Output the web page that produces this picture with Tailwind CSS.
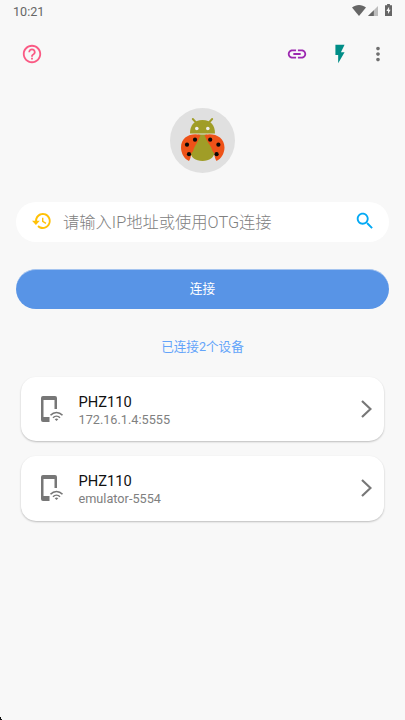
<!DOCTYPE html>
<html lang="zh-CN">
<head>
<meta charset="utf-8">
<meta name="viewport" content="width=device-width, initial-scale=1">
<title>连接设备</title>
<script src="https://cdn.jsdelivr.net/npm/@tailwindcss/browser@4"></script>
</head>
<body class="relative h-[720px] w-[405px] overflow-hidden bg-[#f8f8f8] font-[Roboto,'Noto_Sans_CJK_SC',sans-serif]">
<div class="flex h-6 items-center justify-between pl-[13px] pr-[13px] text-[#666]">
  <span class="text-[12.600px] leading-6">10:21</span>
  <div class="flex h-6 items-start pt-[5px]">
    <svg class="h-[11px] w-[14px]" viewBox="0 0 14 11"><path fill="#666" d="M0 2.600C4-.8 10-.8 14 2.600L7 11z"/></svg>
    <svg class="ml-[2px] mt-[1px] h-[10px] w-[10px]" viewBox="0 0 10 10"><path fill="#bdbdbd" d="M0 10 10 0v10z"/><path fill="#666" d="M0 10 5.800 4.200V10z"/></svg>
    <svg class="-mt-px ml-[7px] h-[12px] w-[7px]" viewBox="0 0 7 12"><path fill="#666" d="M2.100 0h2.800v1.200H7V12H0V1.200h2.100z"/><path fill="#f8f8f8" d="M4.100 2.800 1.400 7H3v3l2.600-4.200H4.100z"/></svg>
  </div>
</div>
<header class="flex h-[60px] items-center pl-[21px] pr-4">
  <svg class="size-[22px]" viewBox="0 0 24 24" fill="#fa5a84"><path d="M11 18h2v-2h-2v2zm1-16C6.480 2 2 6.480 2 12s4.480 10 10 10 10-4.480 10-10S17.520 2 12 2zm0 18c-4.410 0-8-3.590-8-8s3.590-8 8-8 8 3.590 8 8-3.590 8-8 8zm0-14c-2.210 0-4 1.790-4 4h2c0-1.100.9-2 2-2s2 .9 2 2c0 2-3 1.750-3 5h2c0-2.250 3-2.500 3-5 0-2.210-1.790-4-4-4z"/></svg>
  <svg class="ml-auto size-[22px]" viewBox="0 0 24 24" fill="#9c27b0"><path d="M3.900 12c0-1.710 1.390-3.100 3.100-3.100h4V7H7c-2.760 0-5 2.240-5 5s2.240 5 5 5h4v-1.900H7c-1.710 0-3.100-1.390-3.100-3.100zM8 13h8v-2H8v2zm9-6h-4v1.900h4c1.710 0 3.100 1.390 3.100 3.100s-1.390 3.100-3.100 3.100h-4V17h4c2.760 0 5-2.240 5-5s-2.240-5-5-5z"/></svg>
  <svg class="ml-[21px] size-[22px]" viewBox="0 0 24 24" fill="#008d87"><path d="M7 2v11h3v9l7-12h-4l4-8z"/></svg>
  <svg class="ml-4 size-[22px]" viewBox="0 0 24 24" fill="#707070"><path d="M12 8c1.100 0 2-.9 2-2s-.9-2-2-2-2 .9-2 2 .9 2 2 2zm0 2c-1.100 0-2 .9-2 2s.9 2 2 2 2-.9 2-2-.9-2-2-2zm0 6c-1.100 0-2 .9-2 2s.9 2 2 2 2-.9 2-2-.9-2-2-2z"/></svg>
</header>
<main class="flex flex-col px-4 pt-6">
  <svg class="size-[65px] self-center" viewBox="0 0 65 65">
    <circle cx="32.500" cy="32.500" r="32.500" fill="#e0e0e0"/>
    <path d="M26 14.500 22.800 11M39 14.500l3.200-3.500" stroke="#a09d27" stroke-width="1.900" stroke-linecap="round" fill="none"/>
    <path d="M20 25.500c0-8 4-13.500 12.500-13.500S45 17.500 45 25.500z" fill="#a09d27"/>
    <circle cx="26.800" cy="20.500" r="1.800" fill="#eee"/><circle cx="37.800" cy="20.500" r="1.800" fill="#eee"/>
    <path d="M28 26.500h9c2.500 7 7.500 11 7.500 17 0 6-5 9.500-12 9.500s-12-3.500-12-9.500c0-6 5-10 7.500-17z" fill="#a09d27"/>
    <path d="M30.500 27C21 24.500 11 29 11 39.500c0 6 3.500 11.500 8 13.500 1.800-3 1.800-5 2.500-8 1.500-1 1.800-3 2.500-5 2-4 5-8 6.500-13z" fill="#ee5218"/>
    <path d="M34.500 27C44 24.500 54.500 29 54.500 39.500c0 6-3.500 11.500-8 13.500-1.800-3-1.800-5-2.500-8-1.500-1-1.800-3-2.500-5-2-4-5.500-8-7-13z" fill="#ee5218"/>
    <g fill="#080808"><circle cx="25" cy="31.700" r="2.100"/><circle cx="17" cy="36.700" r="2.100"/><circle cx="19" cy="46.200" r="2.100"/><circle cx="40.200" cy="31.700" r="2.100"/><circle cx="48.400" cy="36.700" r="2.100"/><circle cx="46.600" cy="46.200" r="2.100"/></g>
  </svg>
  <div class="mt-[29px] flex h-10 items-center rounded-[20px] bg-white pl-4 pr-[13px]">
    <svg class="mt-[-2px] size-5" viewBox="0 0 24 24" fill="#ffc107"><path d="M13 2.500c-5 0-9.200 4-9.300 9.200H0l4.700 5L9.400 11.700H6.100c.1-3.900 3.200-6.900 6.900-6.900 4 0 7.200 3.200 7.200 7.200s-3.200 7.200-7.200 7.200c-1.930 0-3.680-.79-4.940-2.060l-1.620 1.620C8.070 20.490 10.410 21.500 13 21.500c5.200 0 9.400-4.230 9.400-9.500S18.200 2.500 13 2.500zm-1 5.500v5l4.280 2.540.9-1.410-3.480-2.080V8H12z"/></svg>
    <span class="ml-[11px] whitespace-nowrap pt-[2px] text-[16.300px] font-light leading-[38px] text-[#808080]">请输入IP地址或使用OTG连接</span>
    <svg class="-mt-[2px] ml-auto size-[22px]" viewBox="0 0 24 24" fill="#03a9f4"><path d="M15.500 14h-.79l-.28-.27C15.410 12.590 16 11.110 16 9.500 16 5.910 13.090 3 9.500 3S3 5.910 3 9.500 5.910 16 9.500 16c1.610 0 3.090-.59 4.230-1.570l.27.28v.79l5 4.990L20.490 19l-4.990-5zm-6 0C7.010 14 5 11.990 5 9.500S7.010 5 9.500 5 14 7.010 14 9.500 11.990 14 9.500 14z"/></svg>
  </div>
  <button class="mt-[27px] h-10 rounded-[20px] border-t border-[#a5c4ef] bg-[#5894e6] pb-[2px] text-[12.700px] text-white">连接</button>
  <p class="mt-[28px] h-5 text-center text-[12.600px] leading-5 text-[#64a4fa]">已连接2个设备</p>
  <div class="ml-[5px] mr-[5px] mt-[20px] flex flex-col gap-[15px]">
    <section class="flex h-16 items-center rounded-[15px] bg-white pl-[17px] pr-3 shadow-[0_1px_2px_rgba(0,0,0,0.24)]">
      <svg class="h-[28px] w-[26px]" viewBox="0 0 26 28"><path fill="#777" d="M5 1h12q2 0 2 2v11h-2.500V5H5.500v17h6v5H5q-2 0-2-2V3q0-2 2-2z"/><path fill="none" stroke="#777" stroke-width="1.600" d="M12.500 20.200c3.500-3.700 8.500-3.700 12 0M15 22.700c2-2 5-2 7 0"/><path fill="#777" d="m18.500 26-1.800-1.800q1.800-1.400 3.600 0z"/></svg>
      <div class="ml-[14.500px] flex flex-col pb-[2px] pt-[4px]"><h2 class="text-[14.700px] leading-[19px] text-[#111]">PHZ110</h2><p class="text-[12.700px] leading-[15px] text-[#808080]">172.16.1.4:5555</p></div>
      <svg class="ml-auto h-[18px] w-[11px]" viewBox="0 0 11 18" fill="none" stroke="#777" stroke-width="2.200"><path d="m1 1 8.500 8-8.500 8"/></svg>
    </section>
    <section class="flex h-[65px] items-center rounded-[15px] bg-white pb-px pl-[17px] pr-3 shadow-[0_1px_2px_rgba(0,0,0,0.24)]">
      <svg class="h-[28px] w-[26px]" viewBox="0 0 26 28"><path fill="#777" d="M5 1h12q2 0 2 2v11h-2.500V5H5.500v17h6v5H5q-2 0-2-2V3q0-2 2-2z"/><path fill="none" stroke="#777" stroke-width="1.600" d="M12.500 20.200c3.500-3.700 8.500-3.700 12 0M15 22.700c2-2 5-2 7 0"/><path fill="#777" d="m18.500 26-1.800-1.800q1.800-1.400 3.600 0z"/></svg>
      <div class="ml-[14.500px] flex flex-col pb-[2px] pt-[4px]"><h2 class="text-[14.700px] leading-[19px] text-[#111]">PHZ110</h2><p class="text-[12.700px] leading-[15px] text-[#808080]">emulator-5554</p></div>
      <svg class="ml-auto h-[18px] w-[11px]" viewBox="0 0 11 18" fill="none" stroke="#777" stroke-width="2.200"><path d="m1 1 8.500 8-8.500 8"/></svg>
    </section>
  </div>
</main>
<svg class="absolute bottom-0 left-0 h-[3px] w-[2px]" viewBox="0 0 2 3"><path fill="#111" d="M0 0h1v2h1v1H0z"/></svg>
</body>
</html>
